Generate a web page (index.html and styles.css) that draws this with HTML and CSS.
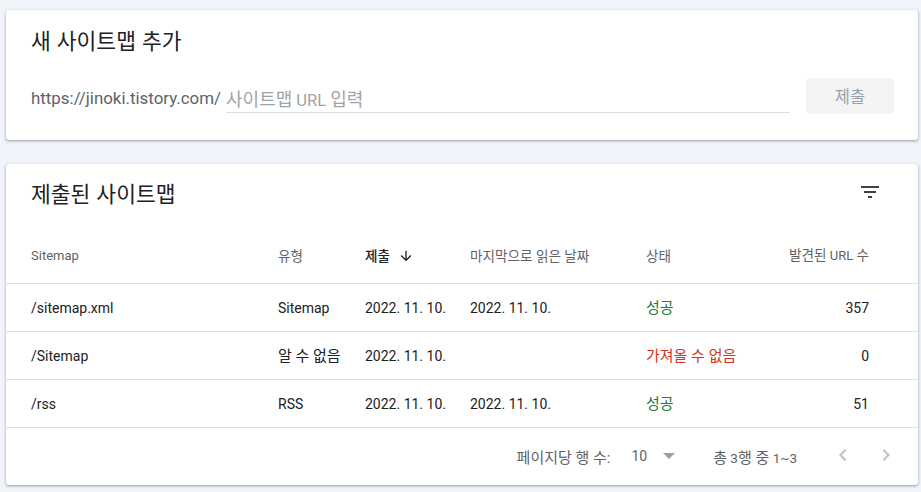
FILE: index.html
```html
<!DOCTYPE html>
<html lang="ko">
<head>
<meta charset="utf-8">
<title>Sitemaps</title>
<link rel="stylesheet" href="styles.css">
</head>
<body>
<section class="card add-card">
  <h2 class="card-title">새 사이트맵 추가</h2>
  <div class="input-row">
    <span class="prefix">https://jinoki.tistory.com/</span>
    <div class="url-field"><span class="placeholder"><span class="ko">사이트맵</span> URL <span class="ko">입력</span></span></div>
    <button class="submit-btn" type="button">제출</button>
  </div>
</section>

<section class="card list-card">
  <div class="list-head">
    <h2 class="card-title">제출된 사이트맵</h2>
    <svg class="filter-icon" width="24" height="24" viewBox="0 0 24 24"><path d="M10 18h4v-2h-4v2zM3 6v2h18V6H3zm3 7h12v-2H6v2z"/></svg>
  </div>
  <div class="table">
    <div class="row head-row">
      <div class="cell">Sitemap</div>
      <div class="cell ko">유형</div>
      <div class="cell sorted"><span class="ko">제출</span><svg class="sort-icon" width="16" height="16" viewBox="0 0 24 24"><path d="M20 12l-1.41-1.41L13 16.17V4h-2v12.17l-5.58-5.59L4 12l8 8 8-8z"/></svg></div>
      <div class="cell ko">마지막으로 읽은 날짜</div>
      <div class="cell ko">상태</div>
      <div class="cell num"><span class="ko">발견된</span> URL <span class="ko">수</span></div>
    </div>
    <div class="row">
      <div class="cell">/sitemap.xml</div>
      <div class="cell">Sitemap</div>
      <div class="cell">2022. 11. 10.</div>
      <div class="cell">2022. 11. 10.</div>
      <div class="cell ok ko">성공</div>
      <div class="cell num">357</div>
    </div>
    <div class="row">
      <div class="cell">/Sitemap</div>
      <div class="cell ko">알 수 없음</div>
      <div class="cell">2022. 11. 10.</div>
      <div class="cell"></div>
      <div class="cell err ko">가져올 수 없음</div>
      <div class="cell num">0</div>
    </div>
    <div class="row">
      <div class="cell">/rss</div>
      <div class="cell">RSS</div>
      <div class="cell">2022. 11. 10.</div>
      <div class="cell">2022. 11. 10.</div>
      <div class="cell ok ko">성공</div>
      <div class="cell num">51</div>
    </div>
  </div>
  <div class="pager">
    <span class="pager-label ko">페이지당 행 수:</span>
    <span class="pager-size">10</span>
    <svg class="drop-icon" width="12" height="6" viewBox="0 0 12 6"><path d="M0 0h12L6 6z"/></svg>
    <span class="pager-range"><span class="ko">총</span> 3<span class="ko">행 중</span> 1~3</span>
    <svg class="chev chev-left" width="24" height="24" viewBox="0 0 24 24"><path d="M15.41 7.41L14 6l-6 6 6 6 1.41-1.41L10.83 12z"/></svg>
    <svg class="chev chev-right" width="24" height="24" viewBox="0 0 24 24"><path d="M10 6L8.59 7.41 13.17 12l-4.58 4.59L10 18l6-6z"/></svg>
  </div>
</section>
</body>
</html>
```
FILE: styles.css
```css
* { box-sizing: border-box; }
html, body { margin: 0; }
body {
  background: #f1f4fb;
  padding: 10px 3px 0 6px;
  font-family: Roboto, "Noto Sans CJK KR", sans-serif;
  color: #202124;
  width: 921px;
  height: 492px;
  overflow: hidden;
}
.card {
  background: #fff;
  border-radius: 3px;
  box-shadow: 0 1px 2px rgba(60,64,67,.3), 0 1px 3px 1px rgba(60,64,67,.15);
}
.card-title {
  margin: 0;
  font-family: "Noto Sans CJK KR", sans-serif;
  font-size: 21.5px;
  font-weight: 400;
  line-height: 32px;
  color: #202124;
}
.add-card {
  height: 130px;
  padding: 14px 24px 0 25px;
}
.input-row {
  display: flex;
  align-items: center;
  height: 36px;
  margin-top: 22px;
}
.prefix {
  font-size: 16.9px;
  line-height: 24px;
  color: #5f6368;
  margin-top: 3px;
  white-space: nowrap;
}
.url-field {
  flex: 1;
  height: 33px;
  margin: 0 16px 0 5px;
  border-bottom: 1px solid #dadce0;
  display: flex;
  align-items: flex-end;
}
.placeholder {
  font-size: 16.5px;
  line-height: 22px;
  color: #a0a4a8;
  white-space: nowrap;
}
.placeholder .ko { font-size: 18px; }
.submit-btn {
  width: 88px;
  height: 36px;
  border: 0;
  border-radius: 4px;
  background: #f4f4f4;
  color: #9aa0a6;
  font-family: "Noto Sans CJK KR", sans-serif;
  font-size: 16.5px;
  padding: 0;
}
.list-card {
  margin-top: 24px;
  height: 321px;
}
.list-head {
  display: flex;
  justify-content: space-between;
  align-items: flex-start;
  padding: 13px 36px 0 25px;
  height: 64px;
}
.filter-icon {
  fill: #3c4043;
  margin-top: 3px;
}
.row {
  display: grid;
  grid-template-columns: 247px 87px 105px 176px 1fr auto;
  align-items: center;
  height: 48px;
  padding: 0 49px 0 25px;
  border-bottom: 1px solid #e0e0e0;
  font-size: 14px;
  color: #202124;
}
.row .ko { font-size: 15px; }
.head-row {
  height: 56px;
  font-size: 13px;
  font-weight: 400;
  color: #5f6368;
}
.head-row .ko { font-size: 13.6px; }
.cell { white-space: nowrap; line-height: 20px; }
.sorted {
  display: flex;
  align-items: center;
  color: #202124;
  font-weight: 500;
}
.sort-icon {
  fill: #202124;
  margin-left: 8px;
}
.num { text-align: right; }
.ok { color: #188038; }
.err { color: #d93025; }
.pager {
  display: flex;
  justify-content: flex-end;
  align-items: center;
  height: 56px;
  padding-right: 20px;
  font-size: 13.5px;
  color: #5f6368;
}
.pager .ko { font-size: 15px; }
.pager-size { margin-left: 21px; font-size: 14px; }
.drop-icon { fill: #9e9e9e; margin-left: 16px; }
.pager-range { margin-left: 38px; white-space: nowrap; }
.chev { fill: #bdc1c6; margin-top: -3px; }
.chev-left { margin-left: 34px; }
.chev-right { margin-left: 19px; }
```
